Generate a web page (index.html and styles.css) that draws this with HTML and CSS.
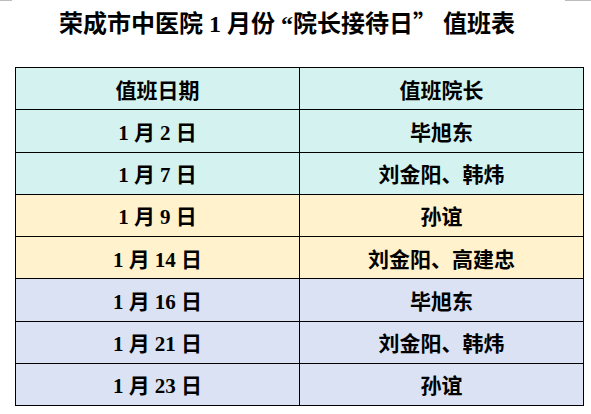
FILE: index.html
```html
<!DOCTYPE html>
<html lang="zh-CN">
<head>
<meta charset="utf-8">
<title>荣成市中医院 1 月份“院长接待日”值班表</title>
<link rel="stylesheet" href="styles.css">
</head>
<body>
<div class="page">
  <div class="topmarks"><span class="mark mark-l"></span><span class="mark mark-r"></span></div>
  <h1 class="title">荣成市中医院 1 月份 “院长接待日<span class="q">”</span> 值班表</h1>
  <div class="duty">
    <div class="cell c-cyan">值班日期</div><div class="cell c-cyan">值班院长</div>
    <div class="cell c-cyan">1 月 2 日</div><div class="cell c-cyan">毕旭东</div>
    <div class="cell c-cyan">1 月 7 日</div><div class="cell c-cyan">刘金阳、韩炜</div>
    <div class="cell c-yellow">1 月 9 日</div><div class="cell c-yellow">孙谊</div>
    <div class="cell c-yellow">1 月 14 日</div><div class="cell c-yellow">刘金阳、高建忠</div>
    <div class="cell c-blue">1 月 16 日</div><div class="cell c-blue">毕旭东</div>
    <div class="cell c-blue">1 月 21 日</div><div class="cell c-blue">刘金阳、韩炜</div>
    <div class="cell c-blue">1 月 23 日</div><div class="cell c-blue">孙谊</div>
  </div>
</div>
</body>
</html>
```

FILE: styles.css
```css
html, body {
  margin: 0;
  padding: 0;
  background: #ffffff;
}

.page {
  width: 591px;
  height: 414px;
  font-family: "Liberation Serif", "Noto Sans CJK SC", serif;
  color: #000000;
}

.topmarks {
  height: 1px;
  display: flex;
  justify-content: space-between;
}

.mark {
  display: block;
  height: 1px;
  background: #bdbdbd;
}

.mark-l { width: 12px; }
.mark-r { width: 26px; }

.title {
  margin: 0;
  padding: 7px 0 0 59px;
  height: 59px;
  box-sizing: border-box;
  font-size: 24px;
  line-height: 27px;
  font-weight: 700;
  text-align: left;
  white-space: pre;
}

.q {
  font-family: "Noto Sans CJK SC", sans-serif;
}

.duty {
  margin: 7px 0 0 15px;
  width: 569px;
  height: 339px;
  box-sizing: border-box;
  padding: 1px;
  background: #000000;
  display: grid;
  grid-template-columns: 1fr 1fr;
  grid-template-rows: repeat(8, 1fr);
  gap: 1px;
}

.cell {
  display: flex;
  align-items: center;
  justify-content: center;
  font-size: 21px;
  font-weight: 700;
  white-space: pre;
}

.c-cyan { background: #d4f3f0; }
.c-yellow { background: #fff2cc; }
.c-blue { background: #dae2f3; }
```
